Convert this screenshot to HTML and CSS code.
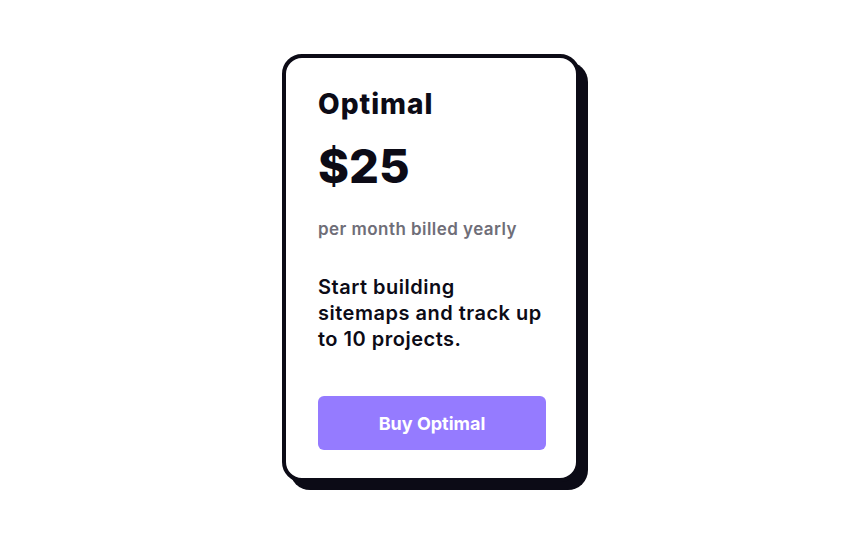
FILE: index.html
```html
<!DOCTYPE html>
<html lang="en">
<head>
<meta charset="utf-8">
<title>Pricing</title>
<link rel="stylesheet" href="styles.css">
</head>
<body>
<main class="page">
  <section class="card">
    <h2 class="plan">Optimal</h2>
    <p class="price">$25</p>
    <p class="period">per month billed yearly</p>
    <p class="desc">Start building sitemaps and track up to 10 projects.</p>
    <button class="buy">Buy Optimal</button>
  </section>
</main>
</body>
</html>
```
FILE: styles.css
```css
* { box-sizing: border-box; }
html, body { margin: 0; padding: 0; background: #fff; }
body {
  font-family: Inter, "Noto Sans", sans-serif;
  color: #0c0b16;
}
.page {
  min-height: 100vh;
  display: flex;
  align-items: center;
  justify-content: center;
  padding: 0 2px 4px 0;
}
.card {
  width: 298px;
  height: 428px;
  border: 4px solid #0c0b16;
  border-radius: 20px;
  box-shadow: 8px 8px 0 #0c0b16;
  background: #fff;
  padding: 30px 28px 28px 32px;
  display: flex;
  flex-direction: column;
}
.plan {
  margin: 0;
  font-size: 28px;
  font-weight: 800;
  line-height: 32px;
  letter-spacing: 1px;
}
.price {
  margin: 18px 0 0;
  font-size: 47px;
  font-weight: 800;
  line-height: 56px;
}
.period {
  margin: 23px 0 0;
  font-size: 17px;
  font-weight: 600;
  line-height: 24px;
  letter-spacing: 0.45px;
  color: #6f6e78;
}
.desc {
  margin: 33px 0 0;
  font-size: 20px;
  font-weight: 600;
  line-height: 26px;
  letter-spacing: 0.5px;
}
.buy {
  margin-top: auto;
  width: 228px;
  height: 54px;
  border: 0;
  border-radius: 6px;
  background: #957bff;
  color: #fff;
  font-family: inherit;
  font-size: 18px;
  font-weight: 700;
}
```
